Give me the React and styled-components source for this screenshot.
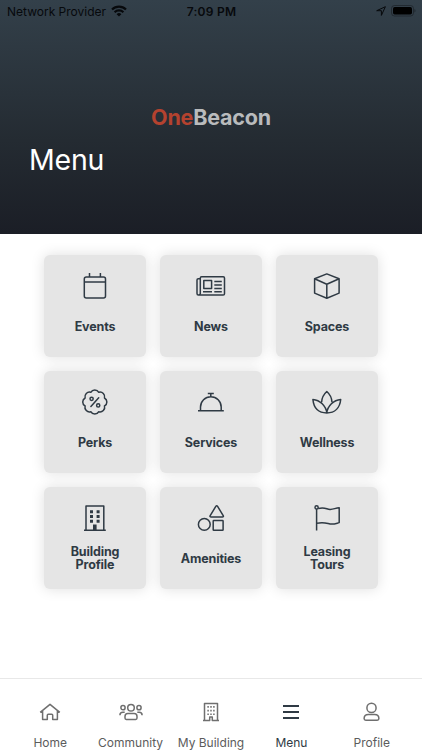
import React from 'react';
import styled, { createGlobalStyle } from 'styled-components';

const GlobalStyle = createGlobalStyle`
  * {
    box-sizing: border-box;
  }

  body {
    margin: 0;
    background-color: #ffffff;
    font-family: Inter, 'Liberation Sans', sans-serif;
  }
`;

const Screen = styled.div`
  width: 100%;
  height: 100vh;
  display: flex;
  flex-direction: column;
  overflow: hidden;
`;

const Header = styled.header`
  height: 234px;
  flex-shrink: 0;
  display: flex;
  flex-direction: column;
  background: linear-gradient(#33404a, #242b32 60%, #1b1e26);
`;

const StatusBar = styled.div`
  height: 22px;
  padding: 0 6px 0 7px;
  display: grid;
  grid-template-columns: 1fr auto 1fr;
  align-items: center;
  color: #07090c;
  font-size: 12px;
`;

const StatusSide = styled.div`
  display: flex;
  align-items: center;
  justify-content: ${props => (props.$right ? 'flex-end' : 'flex-start')};
  gap: 5px;
  white-space: nowrap;
`;

const Time = styled.span`
  font-weight: 600;
  letter-spacing: 0.27px;
`;

const Logo = styled.div`
  margin-top: 83px;
  height: 24px;
  line-height: 24px;
  text-align: center;
  font-size: 21.5px;
  font-weight: 700;
  letter-spacing: -0.2px;
  color: #b9bbbd;

  & span {
    color: #b4422f;
  }
`;

const Title = styled.h1`
  margin: 13px 0 0 29px;
  font-size: 28.5px;
  line-height: 36px;
  font-weight: 400;
  letter-spacing: -0.2px;
  color: white;
`;

const Content = styled.main`
  flex: 1;
  padding-top: 21px;
`;

const Grid = styled.div`
  display: grid;
  grid-template-columns: repeat(3, 102px);
  grid-auto-rows: 102px;
  gap: 14px;
  justify-content: center;
`;

const Tile = styled.div`
  display: flex;
  flex-direction: column;
  align-items: center;
  padding-top: 18px;
  border-radius: 6px;
  background-color: #e5e5e5;
  box-shadow: 0 0 14px rgba(0, 0, 0, 0.13);
  color: #2f3a44;
`;

const TileLabel = styled.div`
  height: 28px;
  margin-top: 13px;
  width: 70px;
  display: flex;
  align-items: center;
  justify-content: center;
  text-align: center;
  font-size: 12.5px;
  line-height: 13px;
  font-weight: 700;
  letter-spacing: -0.15px;
`;

const TabBar = styled.nav`
  height: 72px;
  padding: 0 10px;
  display: grid;
  grid-template-columns: repeat(5, 1fr);
  border-top: 1px solid #e8e8e8;
`;

const Tab = styled.div`
  display: flex;
  flex-direction: column;
  align-items: center;
  padding-top: 23px;
  color: ${props => (props.$active ? '#2f3a44' : '#6f6f6f')};
`;

const TabLabel = styled.span`
  margin-top: 13px;
  font-size: 12px;
  line-height: 16px;
  white-space: nowrap;
  color: ${props => (props.$active ? '#2f3a44' : '#5c5c5c')};
`;

const TileSvg = styled.svg.attrs({ viewBox: '0 0 30 26' })`
  width: 30px;
  height: 26px;
  overflow: visible;
  fill: none;
  stroke: currentColor;
  stroke-width: 1.5;
  stroke-linejoin: round;
`;

const TabSvg = styled.svg.attrs({ viewBox: '0 0 24 20' })`
  width: 24px;
  height: 20px;
  overflow: visible;
  fill: none;
  stroke: currentColor;
  stroke-width: 1.5;
  stroke-linejoin: round;
`;

// scalloped badge with eight lobes
const badgePoints = Array.from({ length: 8 }, (_, i) => {
  const angle = ((i * 45 + 22.5) * Math.PI) / 180;
  return `${(14.8 + 10.5 * Math.cos(angle)).toFixed(2)} ${(13 + 10.5 * Math.sin(angle)).toFixed(2)}`;
});
const badgePath =
  `M${badgePoints[0]}` +
  [...badgePoints.slice(1), badgePoints[0]].map(p => `A4.6 4.6 0 0 1 ${p}`).join('') +
  'Z';

const tiles = [
  {
    label: 'Events',
    icon: (
      <>
        <rect x="4.3" y="4" width="21.2" height="21" rx="2" />
        <path d="M4.3 8.9h21.2M9.5 0v4M20.4 0v4" />
      </>
    ),
  },
  {
    label: 'News',
    icon: (
      <>
        <path d="M4.3 21V5q0-1.3 1.3-1.3h21.6q1.3 0 1.3 1.3v15.7q0 1.3-1.3 1.3H2.4Q1 22 1 20.5V7q0-1.3 1.3-1.3h2M4.3 20.3Q4.3 22 2.6 22" />
        <path d="M7.8 7.6h7.8v7.8H7.8zM18.3 8.4h7.5M18.3 12h7.5M18.3 15.4h7.5M7 18.8h9M18.3 18.8h7.5" />
      </>
    ),
  },
  {
    label: 'Spaces',
    icon: <path d="M14.8.9 27.1 5.8v14.3L14.8 25.2 2.6 20.1V5.8zM2.6 5.8l12.2 5.4 12.3-5.4M14.8 11.2v14" />,
  },
  {
    label: 'Perks',
    icon: (
      <>
        <path d={badgePath} />
        <path d="M18.7 8.7 10.9 17.4" strokeLinecap="round" />
        <circle cx="11.6" cy="9.8" r="1.6" />
        <circle cx="18.2" cy="16.4" r="1.6" />
      </>
    ),
  },
  {
    label: 'Services',
    icon: <path d="M2 21.8h25.8M4.5 21.8V18a10.35 10.35 0 0 1 20.7 0v3.8M14.8 7.6V4.4M11.8 4.4h6" />,
  },
  {
    label: 'Wellness',
    icon: (
      <path d="M14.8 23.9C14 17 8 11 .9 10.5 1.7 18.7 6.5 23.9 14.8 23.9 23 23.9 27.9 18.7 28.7 10.5 21.6 11 15.6 17 14.8 23.9M9.6 13.3C9.8 8.8 11.4 5.5 14.8 2.5 18.2 5.5 19.8 8.8 20 13.3" />
    ),
  },
  {
    label: 'Building Profile',
    icon: (
      <>
        <path d="M6 25V.9h17.8V25M4 25.2h21.8" />
        <path
          d="M10 5.3h3v3h-3zM16.6 5.3h3v3h-3zM10 10h3v3h-3zM16.6 10h3v3h-3zM10 14.8h3v3h-3zM16.6 14.8h3v3h-3zM13 19.5h3.6v5.6H13z"
          fill="currentColor"
          stroke="none"
        />
      </>
    ),
  },
  {
    label: 'Amenities',
    icon: (
      <>
        <path d="M19.8 1.4q.9-1.3 1.8 0l5.6 9.2q.7 1.4-.9 1.4H15.1q-1.6 0-.9-1.4z" />
        <circle cx="8.3" cy="19.4" r="5.9" />
        <rect x="17.2" y="15.6" width="9.9" height="9.7" rx=".6" />
      </>
    ),
  },
  {
    label: 'Leasing Tours',
    icon: (
      <>
        <circle cx="4.6" cy="2.4" r="1.6" />
        <path d="M4.6 4v21.6M6.2 3.5C13 1.7 14.5 4.3 18 4.4 21.5 4.5 23.5 2.9 27.2 2.8V17.6C23.5 18.6 21.5 19.6 18 18.9 14.5 18.2 11 16.6 4.6 18.4" />
      </>
    ),
  },
];

const tabs = [
  {
    label: 'Home',
    icon: <path d="M2.2 10.4 12 2.3l9.8 8.1M4.6 8.9v8.7h4.7v-4.3q0-1 1-1h3.4q1 0 1 1v4.3h4.7V8.9" />,
  },
  {
    label: 'Community',
    icon: (
      <>
        <circle cx="12" cy="5.7" r="3.3" />
        <circle cx="4" cy="5.7" r="2.1" />
        <circle cx="20" cy="5.7" r="2.1" />
        <path d="M8.8 11.6h6.4q2.8 0 2.8 3v1.5q0 1.3-1.3 1.3H7.3Q6 17.4 6 16.1v-1.5q0-3 2.8-3zM.9 13.3q0-3 3-3h1.8M23.1 13.3q0-3-3-3h-1.8" />
      </>
    ),
  },
  {
    label: 'My Building',
    icon: (
      <>
        <path d="M5.5 18.5V1.5h13v17M4 18.6h6.7v-3.7h2.6v3.7H20" />
        <path d="M9.1 4v9.5M12 4v9.5M14.9 4v9.5" strokeDasharray="1.7 2" />
      </>
    ),
  },
  {
    label: 'Menu',
    active: true,
    icon: <path d="M4 4h16M4 10h16M4 16h16" strokeWidth="2" />,
  },
  {
    label: 'Profile',
    icon: (
      <>
        <circle cx="11.5" cy="5.9" r="4.6" />
        <path d="M8.3 12.4h6.4q4.2 0 4.2 4.1 0 1.7-1.7 1.7H5.8q-1.7 0-1.7-1.7 0-4.1 4.2-4.1z" />
      </>
    ),
  },
];

const WifiIcon = () => (
  <svg width="16" height="12" viewBox="0 0 16 12" fill="none" stroke="currentColor" strokeWidth="2.2">
    <path d="M1 4.5a10 10 0 0 1 14 0M3.6 7.2a6.3 6.3 0 0 1 8.8 0" />
    <path d="M8 11.6 5.6 9.2a3.5 3.5 0 0 1 4.8 0z" fill="currentColor" stroke="none" />
  </svg>
);

const LocationIcon = () => (
  <svg width="10" height="10" viewBox="0 0 10 10" fill="none" stroke="currentColor" strokeLinejoin="round">
    <path d="M9.4.7.7 4.7h4.7v4.7z" />
  </svg>
);

const BatteryIcon = () => (
  <svg width="25" height="12" viewBox="0 0 25 12">
    <rect x=".5" y=".5" width="22" height="10.5" rx="3" fill="none" stroke="#171d22" strokeOpacity=".6" />
    <rect x="2" y="2" width="19" height="7.5" rx="1.7" fill="#000" />
    <path d="M23.6 4q1.5 1.7 0 3.5z" fill="#171d22" />
  </svg>
);

const App = () => {
  return (
    <Screen>
      <GlobalStyle />
      <Header>
        <StatusBar>
          <StatusSide>
            <span>Network Provider</span>
            <WifiIcon />
          </StatusSide>
          <Time>7:09 PM</Time>
          <StatusSide $right>
            <LocationIcon />
            <BatteryIcon />
          </StatusSide>
        </StatusBar>
        <Logo>
          <span>One</span>Beacon
        </Logo>
        <Title>Menu</Title>
      </Header>
      <Content>
        <Grid>
          {tiles.map(tile => (
            <Tile key={tile.label}>
              <TileSvg>{tile.icon}</TileSvg>
              <TileLabel>{tile.label}</TileLabel>
            </Tile>
          ))}
        </Grid>
      </Content>
      <TabBar>
        {tabs.map(tab => (
          <Tab key={tab.label} $active={tab.active}>
            <TabSvg>{tab.icon}</TabSvg>
            <TabLabel $active={tab.active}>{tab.label}</TabLabel>
          </Tab>
        ))}
      </TabBar>
    </Screen>
  );
};

export default App;
